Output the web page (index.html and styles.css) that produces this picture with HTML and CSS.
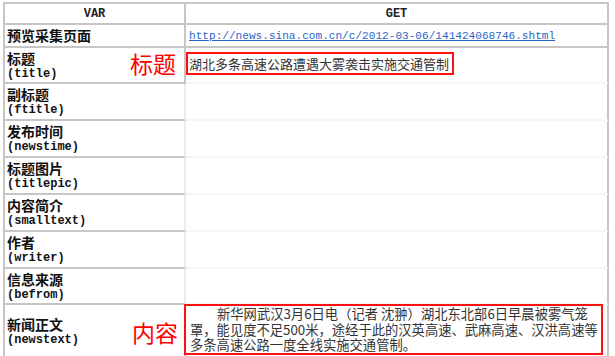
FILE: index.html
```html
<!DOCTYPE html>
<html lang="zh-CN">
<head>
<meta charset="utf-8">
<title>采集预览</title>
<link rel="stylesheet" href="styles.css">
</head>
<body>
<div class="sheet">
  <div class="cell head">VAR</div>
  <div class="cell head">GET</div>

  <div class="cell key"><span class="zh">预览采集页面</span></div>
  <div class="cell val url"><a href="#">http://news.sina.com.cn/c/2012-03-06/141424068746.shtml</a></div>

  <div class="cell key split first">
    <div class="kt"><span class="zh">标题</span><span class="en">(title)</span></div>
    <span class="mark">标题</span>
  </div>
  <div class="cell val soft"><div class="hl title-box">湖北多条高速公路遭遇大雾袭击实施交通管制</div></div>

  <div class="cell key faint"><span class="zh">副标题</span><span class="en">(ftitle)</span></div>
  <div class="cell val soft"></div>

  <div class="cell key faint"><span class="zh">发布时间</span><span class="en">(newstime)</span></div>
  <div class="cell val soft"></div>

  <div class="cell key faint"><span class="zh">标题图片</span><span class="en">(titlepic)</span></div>
  <div class="cell val soft"></div>

  <div class="cell key faint"><span class="zh">内容简介</span><span class="en">(smalltext)</span></div>
  <div class="cell val soft"></div>

  <div class="cell key faint"><span class="zh">作者</span><span class="en">(writer)</span></div>
  <div class="cell val soft"></div>

  <div class="cell key faint"><span class="zh">信息来源</span><span class="en">(befrom)</span></div>
  <div class="cell val soft"></div>

  <div class="cell key split last">
    <div class="kt"><span class="zh">新闻正文</span><span class="en">(newstext)</span></div>
    <span class="mark">内容</span>
  </div>
  <div class="cell val last"><div class="hl body-box"><span class="indent">新华网武汉3月6日电（记者 沈翀）湖北东北部6日早晨被雾气笼</span><br>罩，能见度不足500米，途经于此的汉英高速、武麻高速、汉洪高速等<br>多条高速公路一度全线实施交通管制。</div></div>
</div>
</body>
</html>
```

FILE: styles.css
```css
* { box-sizing: border-box; }

html, body {
  margin: 0;
  padding: 0;
  background: #ffffff;
}

body {
  padding: 2px 0 0 3px;
  font-family: "Noto Sans CJK SC", "Noto Sans", sans-serif;
  color: #1a1a1a;
  overflow: hidden;
}

.sheet {
  display: grid;
  grid-template-columns: 181px 423px;
  grid-template-rows: 21px 23px 36px 37px 37px 37px 37px 37px 36px 52px;
  border-left: 2px solid #c6c6c6;
  border-top: 2px solid #c6c6c6;
  width: 606px;
}

.cell {
  border-right: 2px solid #c6c6c6;
  border-bottom: 2px solid #c6c6c6;
  min-width: 0;
}

.head {
  display: flex;
  align-items: center;
  justify-content: center;
  font-family: "Liberation Mono", monospace;
  font-weight: bold;
  font-size: 12px;
  color: #222;
}

.key {
  display: flex;
  flex-direction: column;
  padding: 2px 2px 0 2px;
  font-weight: bold;
}

.key.faint { border-right-color: #ececec; }

.zh {
  font-family: "Noto Sans CJK SC", sans-serif;
  font-size: 14px;
  line-height: 17px;
  font-weight: bold;
  color: #111;
}

.en {
  font-family: "Liberation Mono", monospace;
  font-size: 12px;
  line-height: 15px;
  font-weight: bold;
  color: #111;
}

.split {
  flex-direction: row;
  align-items: center;
  justify-content: space-between;
  padding-right: 6px;
}

.split.first { padding-right: 8px; }

.split .kt {
  display: flex;
  flex-direction: column;
  align-self: flex-start;
}

.split.last .kt { align-self: center; }

.mark {
  font-family: "Noto Sans CJK SC", sans-serif;
  font-weight: normal;
  font-size: 23px;
  line-height: 26px;
  color: #ff0000;
}

.split.first .mark { margin-top: -7px; }

.url {
  padding: 4px 0 0 3px;
  font-family: "Liberation Mono", monospace;
  font-size: 11.1px;
  line-height: 14px;
}

.url a {
  color: #2a66c8;
  text-decoration: underline;
}

.val.soft { border-bottom-color: #f6f6f6; }

.last { border-bottom: 0; }

.hl {
  border: 2px solid #ff1010;
  color: #333;
}

.title-box {
  display: inline-block;
  margin-top: 4px;
  margin-left: 0;
  padding: 0 3px 0 1px;
  font-size: 13px;
  line-height: 19px;
}

.body-box {
  margin: -1px 4px 0 -2px;
  padding: 0 0 0 4px;
  font-size: 13.3px;
  line-height: 15.5px;
  white-space: nowrap;
}

.indent { padding-left: 27px; }
```
